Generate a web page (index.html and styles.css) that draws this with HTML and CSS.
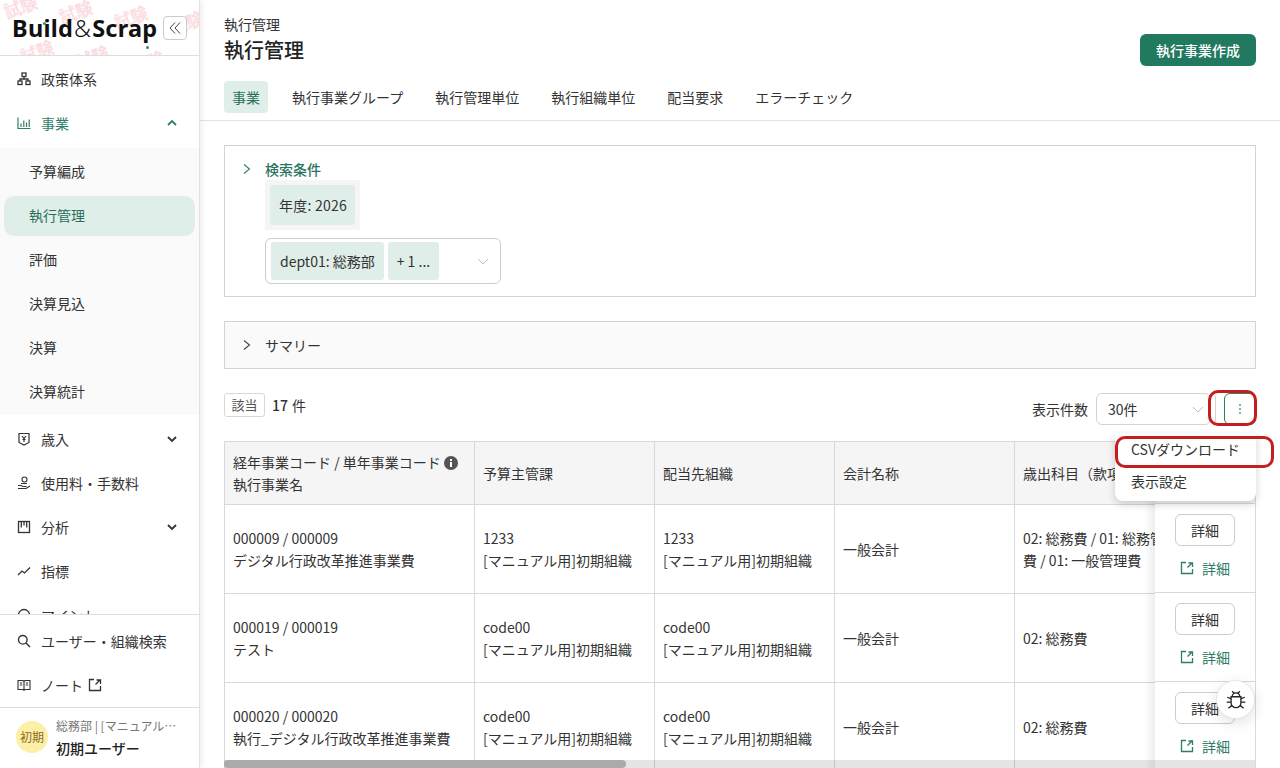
FILE: index.html
```html
<!DOCTYPE html>
<html lang="ja">
<head>
    <meta charset="UTF-8">
    <title>執行管理</title>
    <link rel="stylesheet" href="styles.css">
</head>
<body>
    <aside class="sidebar">
        <div class="brand">
            <svg class="watermark" width="199" height="55">
                <defs>
                    <pattern id="wm" width="100" height="48" patternUnits="userSpaceOnUse" patternTransform="rotate(-20)">
                        <text x="0" y="20" class="wm-text">試験</text>
                        <text x="50" y="44" class="wm-text">試験</text>
                    </pattern>
                </defs>
                <rect width="199" height="55" fill="url(#wm)"></rect>
            </svg>
            <div class="logo">Build<span class="amp">&amp;</span>Scrap<i class="dot dot-i"></i><i class="dot dot-p"></i></div>
            <button class="collapse">
                <svg width="14" height="14" viewBox="0 0 14 14" fill="none" stroke="#444" stroke-width="1"><path d="M7 1.5 2 7l5 5.5M12 1.5 7 7l5 5.5"/></svg>
            </button>
        </div>
        <nav class="nav">
            <a class="nav-item">
                <svg class="ico" viewBox="0 0 14 14" fill="none" stroke="#333" stroke-width="1.3"><rect x="5" y="1" width="4" height="3.5"/><rect x="1" y="9" width="4" height="3.5"/><rect x="9" y="9" width="4" height="3.5"/><path d="M3 9V7h8v2M7 4.5V7"/></svg>
                <span>政策体系</span>
            </a>
            <a class="nav-item is-open">
                <svg class="ico" viewBox="0 0 14 14" fill="none" stroke="#2f7d69" stroke-width="1.2"><path d="M1 1.500V12.500H13.500M4 11V7.500M6.800 11V4.500M9.500 11V6.500M12.200 11V3.500"/></svg>
                <span>事業</span>
                <svg class="chev" viewBox="0 0 10 6" fill="none" stroke="#2f7d69" stroke-width="1.8"><path d="M1 5l4-4 4 4"/></svg>
            </a>
            <div class="subnav">
                <a class="sub-item">予算編成</a>
                <a class="sub-item is-active">執行管理</a>
                <a class="sub-item">評価</a>
                <a class="sub-item">決算見込</a>
                <a class="sub-item">決算</a>
                <a class="sub-item">決算統計</a>
            </div>
            <a class="nav-item">
                <svg class="ico" viewBox="0 0 14 14" fill="none" stroke="#333" stroke-width="1.2"><path d="M2 1.500h10v9L7 13 2 10.500zM5 4l2 2.500L9 4M7 6.500V10M5.500 7.500h3"/></svg>
                <span>歳入</span>
                <svg class="chev" viewBox="0 0 10 6" fill="none" stroke="#333" stroke-width="1.8"><path d="M1 1l4 4 4-4"/></svg>
            </a>
            <a class="nav-item">
                <svg class="ico" viewBox="0 0 14 14" fill="none" stroke="#333" stroke-width="1.1"><circle cx="7.500" cy="3.500" r="2.500"/><path d="M1 9.500h3l2 1h3.500M1 12.500h8l4-2.500M4 7.500h6"/></svg>
                <span>使用料・手数料</span>
            </a>
            <a class="nav-item">
                <svg class="ico" viewBox="0 0 14 14" fill="none" stroke="#333" stroke-width="1.3"><rect x="1.500" y="1.500" width="11" height="11"/><path d="M4.300 2v5.500M7 2v3.500M9.700 2v5.500"/></svg>
                <span>分析</span>
                <svg class="chev" viewBox="0 0 10 6" fill="none" stroke="#333" stroke-width="1.8"><path d="M1 1l4 4 4-4"/></svg>
            </a>
            <a class="nav-item">
                <svg class="ico" viewBox="0 0 14 14" fill="none" stroke="#333" stroke-width="1.3"><path d="M1 11l4-4 2.500 2L13 3.500"/></svg>
                <span>指標</span>
            </a>
            <a class="nav-item">
                <svg class="ico" viewBox="0 0 14 14" fill="none" stroke="#333" stroke-width="1.3"><circle cx="7" cy="7" r="5.500"/></svg>
                <span>マイント</span>
            </a>
        </nav>
        <div class="nav-bottom">
            <a class="nav-item">
                <svg class="ico" viewBox="0 0 14 14" fill="none" stroke="#333" stroke-width="1.4"><circle cx="5.800" cy="5.800" r="4.300"/><path d="M9 9l4 4"/></svg>
                <span>ユーザー・組織検索</span>
            </a>
            <a class="nav-item">
                <svg class="ico" viewBox="0 0 14 14" fill="none" stroke="#333" stroke-width="1.1"><path d="M1 2.500h5L7 3.500 8 2.500h5v9H8l-1 .8-1-.8H1zM7 3.500v8.500M2.800 5h2.500M2.800 7h2.500M8.700 5h2.500M8.700 7h2.500"/></svg>
                <span>ノート</span>
                <svg class="ext" viewBox="0 0 14 14" fill="none" stroke="#333" stroke-width="1.300"><path d="M6 1.500H1.500v11h11V8M7.500 6.500l4-4M8.500 2h4v4"/></svg>
            </a>
        </div>
        <div class="user">
            <div class="avatar">初期</div>
            <div class="user-text">
                <div class="user-dept">総務部 | [マニュアル用]初期組織</div>
                <div class="user-name">初期ユーザー</div>
            </div>
        </div>
    </aside>

    <main class="main">
        <header class="page-head">
            <div>
                <div class="crumb">執行管理</div>
                <h1 class="title">執行管理</h1>
            </div>
            <button class="primary">執行事業作成</button>
        </header>
        <div class="tabs">
            <a class="tab is-active">事業</a>
            <a class="tab">執行事業グループ</a>
            <a class="tab">執行管理単位</a>
            <a class="tab">執行組織単位</a>
            <a class="tab">配当要求</a>
            <a class="tab">エラーチェック</a>
        </div>

        <div class="content">
            <section class="panel filter">
                <div class="panel-title is-green">
                    <svg class="caret" viewBox="0 0 8 12" fill="none" stroke="#2f7d69" stroke-width="1.100"><path d="M1 1.500 6.500 6 1 10.500"/></svg>
                    <span>検索条件</span>
                </div>
                <div class="year-wrap"><span class="chip">年度: 2026</span></div>
                <div class="multi">
                    <span class="chip">dept01: 総務部</span>
                    <span class="chip">+ 1 ...</span>
                    <svg class="select-arrow" viewBox="0 0 12 7" fill="none" stroke="#bbb" stroke-width="1"><path d="M1 1l5 5 5-5"/></svg>
                </div>
            </section>

            <section class="panel summary">
                <div class="panel-title">
                    <svg class="caret" viewBox="0 0 8 12" fill="none" stroke="#444" stroke-width="1.100"><path d="M1 1.500 6.500 6 1 10.500"/></svg>
                    <span>サマリー</span>
                </div>
            </section>

            <div class="toolbar">
                <div class="count">
                    <span class="count-tag">該当</span>
                    <span class="count-num">17</span>
                    <span>件</span>
                </div>
                <div class="toolbar-right">
                    <span class="per-label">表示件数</span>
                    <div class="per-select">
                        <span>30件</span>
                        <svg class="select-arrow" viewBox="0 0 12 7" fill="none" stroke="#bbb" stroke-width="1"><path d="M1 1l5 5 5-5"/></svg>
                    </div>
                    <span class="divider"></span>
                    <button class="more">
                        <svg width="4" height="12" viewBox="0 0 4 12" fill="#5a9a88"><circle cx="2" cy="2" r="1"/><circle cx="2" cy="6" r="1"/><circle cx="2" cy="10" r="1"/></svg>
                    </button>
                </div>
                <span class="mark mark-more"></span>
                <div class="menu">
                    <div class="menu-item">CSVダウンロード</div>
                    <div class="menu-item">表示設定</div>
                    <span class="mark mark-csv"></span>
                </div>
            </div>

            <div class="table-wrap">
                <table class="table">
                    <thead>
                        <tr>
                            <th class="col-code">
                                <div>経年事業コード / 単年事業コード
                                    <svg class="info" viewBox="0 0 14 14"><circle cx="7" cy="7" r="7" fill="#555"/><rect x="6" y="6" width="2" height="5" fill="#fff"/><rect x="6" y="3" width="2" height="2" fill="#fff"/></svg>
                                </div>
                                <div>執行事業名</div>
                            </th>
                            <th class="col-org">予算主管課</th>
                            <th class="col-org">配当先組織</th>
                            <th class="col-org">会計名称</th>
                            <th class="col-item">歳出科目（款項目）</th>
                            <th class="col-rest"></th>
                        </tr>
                    </thead>
                    <tbody>
                        <tr>
                            <td>000009 / 000009<br>デジタル行政改革推進事業費</td>
                            <td>1233<br>[マニュアル用]初期組織</td>
                            <td>1233<br>[マニュアル用]初期組織</td>
                            <td>一般会計</td>
                            <td>02: 総務費 / 01: 総務管理費 / 01: 一般管理費</td>
                            <td></td>
                        </tr>
                        <tr>
                            <td>000019 / 000019<br>テスト</td>
                            <td>code00<br>[マニュアル用]初期組織</td>
                            <td>code00<br>[マニュアル用]初期組織</td>
                            <td>一般会計</td>
                            <td>02: 総務費</td>
                            <td></td>
                        </tr>
                        <tr>
                            <td>000020 / 000020<br>執行_デジタル行政改革推進事業費</td>
                            <td>code00<br>[マニュアル用]初期組織</td>
                            <td>code00<br>[マニュアル用]初期組織</td>
                            <td>一般会計</td>
                            <td>02: 総務費</td>
                            <td></td>
                        </tr>
                    </tbody>
                </table>
                <div class="actions">
                    <div class="action-head"></div>
                    <div class="action-cell">
                        <button class="detail">詳細</button>
                        <a class="detail-link"><svg class="ext" viewBox="0 0 14 14" fill="none" stroke="#2f7d69" stroke-width="1.300"><path d="M6 1.500H1.500v11h11V8M7.500 6.500l4-4M8.500 2h4v4"/></svg>詳細</a>
                    </div>
                    <div class="action-cell">
                        <button class="detail">詳細</button>
                        <a class="detail-link"><svg class="ext" viewBox="0 0 14 14" fill="none" stroke="#2f7d69" stroke-width="1.300"><path d="M6 1.500H1.500v11h11V8M7.500 6.500l4-4M8.500 2h4v4"/></svg>詳細</a>
                    </div>
                    <div class="action-cell">
                        <button class="detail">詳細</button>
                        <a class="detail-link"><svg class="ext" viewBox="0 0 14 14" fill="none" stroke="#2f7d69" stroke-width="1.300"><path d="M6 1.500H1.500v11h11V8M7.500 6.500l4-4M8.500 2h4v4"/></svg>詳細</a>
                    </div>
                </div>
                <div class="scrollbar"><div class="scroll-thumb"></div></div>
            </div>
        </div>

        <button class="bug">
            <svg width="24" height="24" viewBox="0 0 22 22" fill="none" stroke="#222" stroke-width="1.200"><path d="M6.500 8h9v5.500a4.500 4.500 0 0 1-9 0zM7.500 8a3.500 3.500 0 0 1 7 0M7.500 3l2 2.200M14.500 3l-2 2.200M6.500 10 3 8.500M15.500 10 19 8.500M6.500 13H2.500M15.500 13h4M7 16l-3 2.500M15 16l3 2.500"/></svg>
        </button>
    </main>
</body>
</html>
```

FILE: styles.css
```css
* {
    box-sizing: border-box;
}
html, body {
    margin: 0;
    height: 100%;
}
body {
    display: flex;
    height: 768px;
    overflow: hidden;
    background: #fff;
    color: #333;
    font-family: "Noto Sans CJK JP", "Noto Sans", sans-serif;
    font-size: 14px;
    line-height: 22px;
}
button {
    font-family: inherit;
}

/* sidebar */
.sidebar {
    position: relative;
    z-index: 2;
    display: flex;
    flex-direction: column;
    width: 200px;
    flex: none;
    height: 768px;
    background: #fff;
    border-right: 1px solid #e2e2e2;
    box-shadow: 2px 0 6px rgba(0, 0, 0, 0.07);
}
.brand {
    position: relative;
    display: flex;
    align-items: center;
    justify-content: space-between;
    height: 56px;
    flex: none;
    padding: 0 12px;
    border-bottom: 1px solid #ddd;
}
.watermark {
    position: absolute;
    top: 0;
    left: 0;
}
.wm-text {
    fill: #fadbdf;
    font-size: 17px;
    font-weight: 700;
}
.logo {
    position: relative;
    font-family: "Noto Sans", sans-serif;
    font-size: 23.5px;
    font-weight: 700;
    letter-spacing: 0.25px;
    color: #111;
}
.amp {
    font-weight: 300;
    margin: 0 1px;
}
.dot {
    position: absolute;
    width: 3px;
    height: 3px;
    border-radius: 50%;
    background: #2f8a70;
}
.dot-i {
    top: 5px;
    left: 31px;
}
.dot-p {
    top: 29px;
    left: 134px;
}
.collapse {
    position: relative;
    display: flex;
    align-items: center;
    justify-content: center;
    width: 24px;
    height: 24px;
    padding: 0;
    background: #fff;
    border: 1px solid #ccc;
    border-radius: 4px;
}
.nav {
    flex: 1;
    overflow: hidden;
    padding-top: 1px;
}
.nav-item {
    display: flex;
    align-items: center;
    height: 44px;
    padding: 0 22px 0 17px;
    color: #333;
}
.nav-item.is-open {
    color: #2f7d69;
}
.ico {
    width: 14px;
    height: 14px;
    margin-right: 10px;
    flex: none;
}
.chev {
    width: 10px;
    height: 6px;
    margin-left: auto;
}
.ext {
    width: 14px;
    height: 14px;
    flex: none;
}
.nav-item .ext {
    margin-left: 5px;
}
.subnav {
    height: 267px;
    margin: 3px 0 2px;
    padding: 4px 4px 0;
    background: #fafafa;
}
.sub-item {
    display: flex;
    align-items: center;
    height: 40px;
    margin-bottom: 4px;
    padding: 0 0 2px 25px;
    border-radius: 10px;
}
.sub-item.is-active {
    background: #e0eeea;
    color: #2a6f5d;
}
.nav-bottom {
    flex: none;
    padding-top: 4px;
    border-top: 1px solid #ddd;
}
.user {
    display: flex;
    align-items: center;
    flex: none;
    gap: 8px;
    height: 61px;
    padding: 0 16px 2px;
    border-top: 1px solid #ddd;
}
.avatar {
    display: flex;
    align-items: center;
    justify-content: center;
    width: 32px;
    height: 32px;
    flex: none;
    border-radius: 50%;
    background: #fdeea8;
    color: #8a6d1a;
    font-size: 12px;
}
.user-text {
    min-width: 0;
    flex: 1;
}
.user-dept {
    overflow: hidden;
    white-space: nowrap;
    text-overflow: ellipsis;
    font-size: 12px;
    color: #777;
}
.user-name {
    color: #222;
    font-weight: 500;
    font-size: 14px;
}

/* main */
.main {
    position: relative;
    flex: 1;
    min-width: 0;
    overflow: hidden;
}
.page-head {
    display: flex;
    align-items: flex-end;
    justify-content: space-between;
    height: 66px;
    padding: 12px 24px 0 24px;
}
.crumb {
    line-height: 20px;
}
.title {
    margin: 0;
    font-size: 20px;
    font-weight: 500;
    line-height: 32px;
    color: #222;
}
.primary {
    width: 116px;
    height: 32px;
    padding: 0;
    border: none;
    border-radius: 6px;
    background: #217a5f;
    color: #fff;
    font-size: 14px;
    font-weight: 500;
}
.tabs {
    display: flex;
    gap: 16px;
    height: 55px;
    padding: 15px 24px 0;
    border-bottom: 1px solid #e3e3e3;
}
.tab {
    height: 32px;
    padding: 0 8px;
    line-height: 32px;
    border-radius: 4px;
}
.tab.is-active {
    background: #e0eeea;
    color: #2a6f5d;
}
.content {
    padding: 24px 24px 0 24px;
}
.panel {
    border: 1px solid #d4d4d4;
}
.filter {
    height: 152px;
    padding: 12px 0 0 18px;
}
.summary {
    height: 48px;
    margin-top: 24px;
    padding: 12px 0 0 18px;
    background: #fafafa;
}
.panel-title {
    display: flex;
    align-items: center;
    gap: 14px;
    height: 22px;
}
.panel-title.is-green {
    color: #2a7560;
    font-weight: 500;
}
.caret {
    width: 8px;
    height: 12px;
}
.year-wrap {
    width: 95px;
    margin-left: 22px;
    padding: 5px;
    background: #f5f5f5;
}
.chip {
    display: inline-block;
    height: 40px;
    padding: 0 9px;
    line-height: 40px;
    border-radius: 3px;
    background: #e0eeea;
    color: #333;
    white-space: nowrap;
}
.year-wrap .chip {
    display: block;
    letter-spacing: 0.25px;
}
.multi {
    display: flex;
    align-items: center;
    gap: 4px;
    width: 236px;
    height: 46px;
    margin: 8px 0 0 22px;
    padding: 0 5px;
    border: 1px solid #ccc;
    border-radius: 6px;
}
.multi .chip {
    height: 38px;
    line-height: 38px;
}
.select-arrow {
    width: 12px;
    height: 7px;
    margin-left: auto;
    margin-right: 6px;
}
.toolbar {
    position: relative;
    display: flex;
    align-items: flex-start;
    justify-content: space-between;
    height: 72px;
    padding-top: 24px;
}
.count {
    display: flex;
    align-items: center;
    gap: 7px;
    height: 24px;
}
.count-tag {
    height: 24px;
    padding: 0 6.5px;
    border: 1.5px solid #d8d8d8;
    border-radius: 3px;
    font-size: 13px;
    line-height: 21px;
    color: #555;
}
.count-num {
    font-weight: 500;
}
.count-num + span {
    margin-left: -3px;
}
.toolbar-right {
    display: flex;
    align-items: center;
    height: 32px;
}
.per-label {
    margin-right: 8px;
}
.per-select {
    display: flex;
    align-items: center;
    width: 115px;
    height: 32px;
    padding-left: 11px;
    border: 1px solid #d4d4d4;
    border-radius: 6px;
}
.divider {
    width: 1px;
    height: 26px;
    margin: 0 8px 0 4px;
    background: #d4d4d4;
}
.more {
    display: flex;
    align-items: center;
    justify-content: center;
    width: 32px;
    height: 32px;
    padding: 0;
    background: #fff;
    border: 1px solid #2f7d69;
    border-radius: 6px;
}
/* red call-outs */
.mark {
    position: absolute;
    border: 3px solid #c41e1e;
    pointer-events: none;
}
.mark-more {
    top: 21px;
    right: -1px;
    width: 49px;
    height: 36px;
    border-radius: 10px;
}
.mark-csv {
    top: 2px;
    left: 0;
    width: 159px;
    height: 32px;
    border-radius: 10px;
}
.menu {
    position: absolute;
    z-index: 5;
    top: 65px;
    right: 0;
    width: 141px;
    height: 67px;
    background: #fff;
    border-radius: 0 0 8px 8px;
    box-shadow: 0 3px 8px rgba(0, 0, 0, 0.18);
}
.menu-item {
    height: 32px;
    padding-left: 16px;
    line-height: 30px;
    white-space: nowrap;
}

/* table */
.table-wrap {
    position: relative;
    height: 327px;
    overflow: hidden;
    border-right: 1px solid #d9d9d9;
}
.table {
    width: 1200px;
    table-layout: fixed;
    border-collapse: collapse;
}
.table th {
    height: 63px;
    padding: 0 8px;
    text-align: left;
    font-weight: 400;
    background: #f5f5f5;
    border: 1px solid #d9d9d9;
    line-height: 22px;
    color: #333;
}
.table td {
    height: 89px;
    padding: 0 8px;
    border: 1px solid #d9d9d9;
    line-height: 22px;
    vertical-align: middle;
}
.col-code {
    width: 250px;
}
.col-org {
    width: 180px;
}
.col-item {
    width: 180px;
}
.col-rest {
    width: 230px;
}
.info {
    width: 14px;
    height: 14px;
    vertical-align: -2px;
}
.actions {
    position: absolute;
    top: 0;
    right: 0;
    width: 100px;
    background: #fff;
    box-shadow: -5px 0 8px rgba(0, 0, 0, 0.08);
}
.action-head {
    height: 63px;
    background: #f5f5f5;
    border-top: 1px solid #d9d9d9;
    border-bottom: 1px solid #d9d9d9;
}
.action-cell {
    display: flex;
    flex-direction: column;
    align-items: center;
    gap: 11px;
    height: 89px;
    padding-top: 10px;
    border-bottom: 1px solid #d9d9d9;
}
.detail {
    width: 60px;
    height: 32px;
    padding: 0;
    background: #fff;
    border: 1px solid #ccc;
    border-radius: 6px;
    color: #333;
    font-size: 14px;
}
.detail-link {
    display: flex;
    align-items: center;
    gap: 8px;
    height: 22px;
    color: #2f7d69;
}
.scrollbar {
    position: absolute;
    z-index: 1;
    left: 0;
    right: 0;
    bottom: 0;
    height: 8px;
    background: rgba(0, 0, 0, 0.1);
}
.scroll-thumb {
    width: 402px;
    height: 8px;
    background: #aaa;
    border-radius: 4px;
}
.bug {
    position: absolute;
    top: 680px;
    left: 1016px;
    display: flex;
    align-items: center;
    justify-content: center;
    width: 39px;
    height: 39px;
    padding: 0;
    background: #fff;
    border: 1px solid #e6e6e6;
    border-radius: 50%;
    box-shadow: 0 4px 14px rgba(0, 0, 0, 0.12);
}
```
